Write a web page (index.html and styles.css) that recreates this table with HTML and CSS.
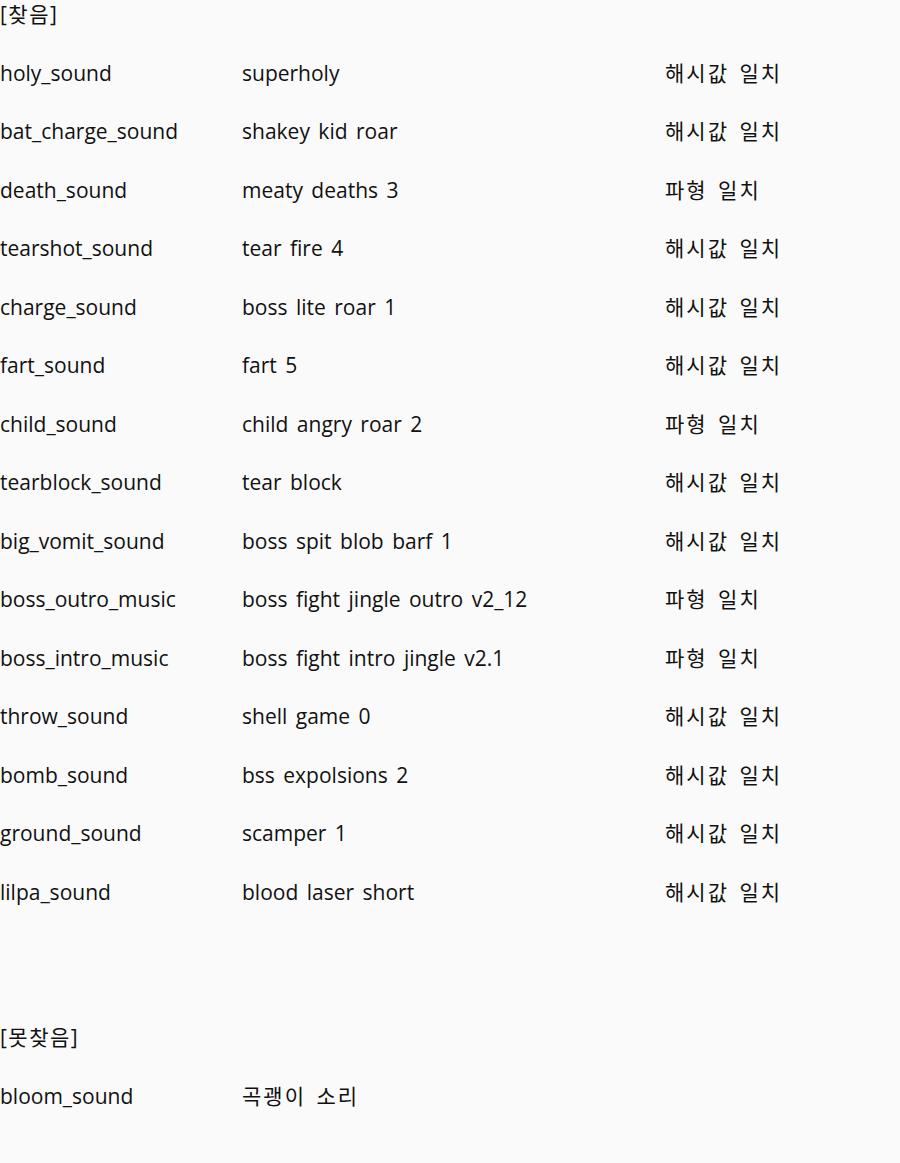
FILE: index.html
```html
<!DOCTYPE html>
<html lang="ko">
<head>
    <meta charset="UTF-8">
    <meta name="viewport" content="width=device-width, initial-scale=1.0">
    <title>사운드 매칭 결과</title>
    <link rel="stylesheet" href="styles.css">
</head>
<body>
    <section class="result found">
        <h2>[찾음]</h2>
        <div class="row"><span>holy_sound</span><span>superholy</span><span class="ko">해시값 일치</span></div>
        <div class="row"><span>bat_charge_sound</span><span>shakey kid roar</span><span class="ko">해시값 일치</span></div>
        <div class="row"><span>death_sound</span><span>meaty deaths 3</span><span class="ko">파형 일치</span></div>
        <div class="row"><span>tearshot_sound</span><span>tear fire 4</span><span class="ko">해시값 일치</span></div>
        <div class="row"><span>charge_sound</span><span>boss lite roar 1</span><span class="ko">해시값 일치</span></div>
        <div class="row"><span>fart_sound</span><span>fart 5</span><span class="ko">해시값 일치</span></div>
        <div class="row"><span>child_sound</span><span>child angry roar 2</span><span class="ko">파형 일치</span></div>
        <div class="row"><span>tearblock_sound</span><span>tear block</span><span class="ko">해시값 일치</span></div>
        <div class="row"><span>big_vomit_sound</span><span>boss spit blob barf 1</span><span class="ko">해시값 일치</span></div>
        <div class="row"><span>boss_outro_music</span><span>boss fight jingle outro v2_12</span><span class="ko">파형 일치</span></div>
        <div class="row"><span>boss_intro_music</span><span>boss fight intro jingle v2.1</span><span class="ko">파형 일치</span></div>
        <div class="row"><span>throw_sound</span><span>shell game 0</span><span class="ko">해시값 일치</span></div>
        <div class="row"><span>bomb_sound</span><span>bss expolsions 2</span><span class="ko">해시값 일치</span></div>
        <div class="row"><span>ground_sound</span><span>scamper 1</span><span class="ko">해시값 일치</span></div>
        <div class="row"><span>lilpa_sound</span><span>blood laser short</span><span class="ko">해시값 일치</span></div>
    </section>

    <section class="result missing">
        <h2>[못찾음]</h2>
        <div class="row"><span>bloom_sound</span><span class="ko">곡괭이 소리</span><span></span></div>
    </section>
</body>
</html>
```

FILE: styles.css
```css
body {
    margin: 0;
    background-color: #fafafa;
    color: #111;
    font-family: "Open Sans", "Noto Sans CJK KR", sans-serif;
    font-size: 21px;
    word-spacing: 3px;
}
.result h2 {
    margin: 0 0 30.5px;
    font-size: 21px;
    font-weight: normal;
    line-height: 28px;
    letter-spacing: 1.5px;
}
.row {
    display: grid;
    grid-template-columns: 242px 423px auto;
    line-height: 28px;
    margin-bottom: 30.5px;
}
.ko {
    letter-spacing: 2px;
}
.missing {
    margin-top: 117.5px;
}
```
